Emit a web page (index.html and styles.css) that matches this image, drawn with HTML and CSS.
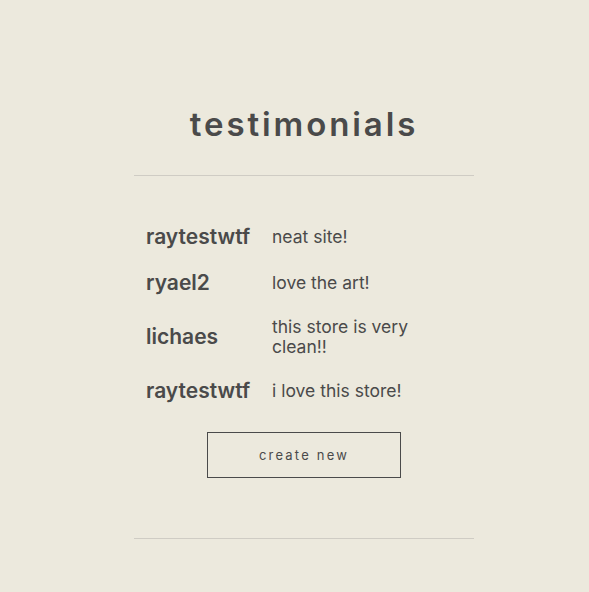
FILE: index.html
```html
<!DOCTYPE html>
<html>
<head>
<meta charset="utf-8">
<link rel="stylesheet" href="styles.css">
</head>
<body>
<main class="page">
  <section class="panel">
    <h1 class="title">testimonials</h1>
    <hr class="rule">
    <table class="list">
      <tr><td class="name">raytestwtf</td><td class="msg">neat site!</td></tr>
      <tr><td class="name">ryael2</td><td class="msg">love the art!</td></tr>
      <tr><td class="name">lichaes</td><td class="msg">this store is very clean!!</td></tr>
      <tr><td class="name">raytestwtf</td><td class="msg">i love this store!</td></tr>
    </table>
    <div class="actions"><button class="btn">create new</button></div>
    <hr class="rule bottom">
  </section>
</main>
</body>
</html>
```
FILE: styles.css
```css
html, body { margin: 0; padding: 0; }
body {
  background: #ece9dd;
  color: #4a4a4a;
  font-family: Inter, "Noto Sans", sans-serif;
  height: 592px;
}
.page { padding-top: 104px; padding-left: 134px; }
.panel { width: 340px; display: flex; flex-direction: column; }
.title {
  margin: 0;
  text-align: center;
  font-size: 33px;
  font-weight: 600;
  letter-spacing: 2.9px;
  line-height: 40px;
  height: 40px;
}
.rule {
  margin: 31px 0 0;
  border: 0;
  border-top: 1px solid #cfccc4;
  height: 0;
}
.list {
  margin: 38px 12px 0;
  border-collapse: collapse;
  table-layout: fixed;
  width: 316px;
}
.list td { padding: 11px 0; vertical-align: middle; }
.name {
  width: 126px;
  font-size: 21px;
  font-weight: 600;
  line-height: 24px;
}
.msg {
  font-size: 17.5px;
  line-height: 20px;
  width: 190px;
}
.actions { display: flex; justify-content: center; margin-top: 18px; }
.btn {
  width: 194px;
  height: 46px;
  background: transparent;
  border: 1px solid #4a4a4a;
  color: #4a4a4a;
  font-family: inherit;
  font-size: 13px;
  letter-spacing: 2.2px;
  padding: 0;
}
.rule.bottom { margin-top: 60px; }
```
